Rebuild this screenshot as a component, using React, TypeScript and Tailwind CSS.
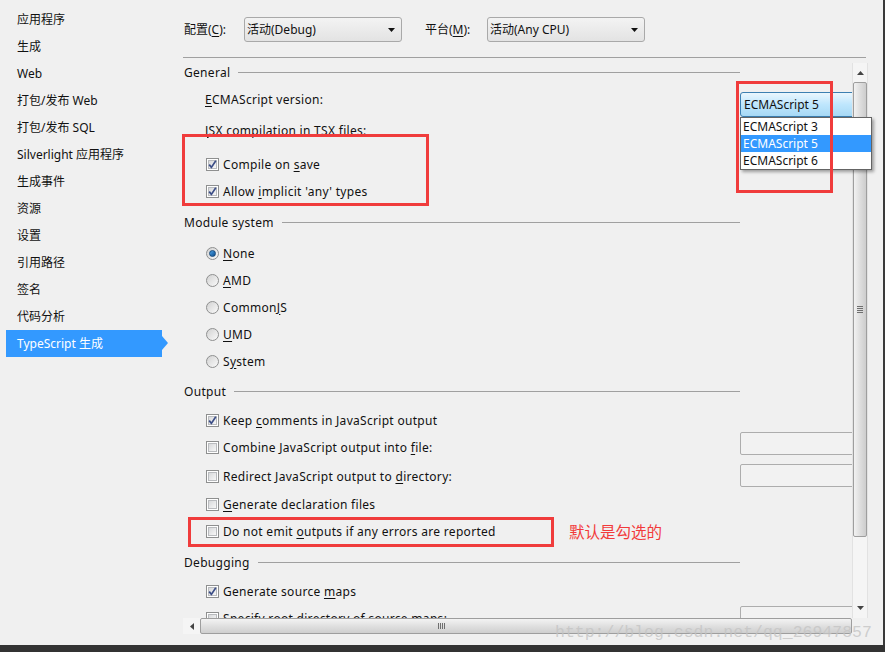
import type { ReactNode } from "react";

const FONT = "font-['Noto_Sans',_'Noto_Sans_CJK_SC',_sans-serif]";

const navItems = [
  "应用程序",
  "生成",
  "Web",
  "打包/发布 Web",
  "打包/发布 SQL",
  "Silverlight 应用程序",
  "生成事件",
  "资源",
  "设置",
  "引用路径",
  "签名",
  "代码分析",
];

function Key({ children }: { children: ReactNode }) {
  return <span className="underline decoration-1 underline-offset-[2px]">{children}</span>;
}

function Check({ on = false }: { on?: boolean }) {
  return (
    <span className="relative flex h-[13px] w-[13px] shrink-0 items-center justify-center border border-[#8e8f8f] bg-white">
      <span className="absolute inset-[1px] border border-[#b9bbbe] bg-gradient-to-br from-[#d8d9db] to-[#f7f7f7]" />
      {on && (
        <svg viewBox="0 0 11 11" className="relative h-[11px] w-[11px]">
          <path d="M2.2 5.6 L4.4 8.4 L8.8 1.8" fill="none" stroke="#3b4d86" strokeWidth="1.7" />
        </svg>
      )}
    </span>
  );
}

function Radio({ on = false }: { on?: boolean }) {
  return (
    <span className="flex h-[13px] w-[13px] shrink-0 items-center justify-center rounded-full border border-[#8e8f8f] bg-gradient-to-br from-[#d2d2d2] to-[#fafafa]">
      {on && <span className="h-[7px] w-[7px] rounded-full border border-[#174a7c] bg-gradient-to-br from-[#4ba3e8] to-[#0c4f8f]" />}
    </span>
  );
}

function Header({ title, mt = "" }: { title: string; mt?: string }) {
  return (
    <div className={`flex h-[27px] w-[557px] items-center pl-[1px] ${mt}`}>
      <span>{title}</span>
      <span className="ml-[8px] h-px flex-1 bg-[#a0a0a0]" />
    </div>
  );
}

function Row({ children, mt = "", right }: { children: ReactNode; mt?: string; right?: ReactNode }) {
  return (
    <div className={`flex h-[27px] ${mt}`}>
      <div className="flex w-[557px] shrink-0 items-center gap-[4px] pl-[23px]">{children}</div>
      {right}
    </div>
  );
}

function TextBox({ mt }: { mt: string }) {
  return <div className={`h-[23px] w-[140px] shrink-0 rounded-[2px] border border-[#adadad] bg-[#f2f2f2] ${mt}`} />;
}

function Select({ label }: { label: string }) {
  return (
    <div className="flex h-[25px] w-[158px] items-center justify-between rounded-[3px] border border-[#a9a9a9] bg-gradient-to-b from-[#f3f3f3] to-[#e3e3e3] pl-[2px] pr-[6px]">
      <span>{label}</span>
      <svg viewBox="0 0 7 4" className="h-[4px] w-[7px]">
        <path d="M0 0 H7 L3.5 4 Z" fill="#111" />
      </svg>
    </div>
  );
}

export default function App() {
  return (
    <div className={`relative flex h-[652px] w-[885px] flex-col overflow-hidden bg-[#f0f0f0] text-[12px] text-[#111] ${FONT}`}>
      <div className="flex h-[645px]">
        {/* left nav */}
        <div className="w-[183px] shrink-0 pt-[6px]">
          {navItems.map((item) => (
            <div key={item} className="flex h-[27px] items-center pl-[17px]">
              {item}
            </div>
          ))}
          <div className="relative ml-[6px] flex h-[27px] w-[156px] items-center bg-[#3399ff] pl-[11px] text-white">
            TypeScript 生成
            <span className="absolute right-[-6px] top-[6px] h-0 w-0 border-y-[7px] border-l-[6px] border-y-transparent border-l-[#3399ff]" />
          </div>
        </div>

        {/* main */}
        <div className="flex w-[700px] flex-col">
          <div className="flex h-[57px] items-center pl-[1px] pt-[2px]">
            <span className="w-[60px]">
              配置(<Key>C</Key>):
            </span>
            <Select label="活动(Debug)" />
            <span className="ml-[23px] w-[62px]">
              平台(<Key>M</Key>):
            </span>
            <Select label="活动(Any CPU)" />
          </div>
          <div className="h-px w-[683px] bg-[#a0a0a0]" />

          <div className="flex h-[560px]">
            <div className="w-[669px] shrink-0 overflow-hidden pt-px tracking-[0.3px]">
              <Header title="General" />
              <div className="flex h-[27px]">
                <div className="flex w-[557px] shrink-0 items-center pl-[22px]">
                  <span>
                    <Key>E</Key>CMAScript version:
                  </span>
                </div>
                <div className="mt-[6px] flex h-[25px] w-[140px] shrink-0 items-center rounded-[3px] border border-[#3c7fb1] bg-gradient-to-b from-[#eaf6fd] via-[#bee6fd] to-[#a7d9f5] pl-[3px] tracking-normal">
                  ECMAScript 5
                </div>
              </div>
              <div className="mt-[4px] flex h-[27px] items-center pl-[22px]">
                <span>
                  <Key>J</Key>SX compilation in TSX files:
                </span>
              </div>
              <Row mt="mt-[7px]">
                <Check on />
                <span>
                  Compile on <Key>s</Key>ave
                </span>
              </Row>
              <Row>
                <Check on />
                <span>
                  Allow <Key>i</Key>mplicit 'any' types
                </span>
              </Row>

              <Header title="Module system" mt="mt-[4px]" />
              <Row mt="mt-[4px]">
                <Radio on />
                <span>
                  <Key>N</Key>one
                </span>
              </Row>
              <Row>
                <Radio />
                <span>
                  <Key>A</Key>MD
                </span>
              </Row>
              <Row>
                <Radio />
                <span>
                  Common<Key>J</Key>S
                </span>
              </Row>
              <Row>
                <Radio />
                <span>
                  <Key>U</Key>MD
                </span>
              </Row>
              <Row>
                <Radio />
                <span>
                  S<Key>y</Key>stem
                </span>
              </Row>

              <Header title="Output" mt="mt-[3px]" />
              <Row mt="mt-[2px]">
                <Check on />
                <span>
                  Keep <Key>c</Key>omments in JavaScript output
                </span>
              </Row>
              <Row right={<TextBox mt="-mt-[2px]" />}>
                <Check />
                <span>
                  Combine JavaScript output into <Key>f</Key>ile:
                </span>
              </Row>
              <Row mt="mt-[2px]" right={<TextBox mt="mt-[1px]" />}>
                <Check />
                <span>
                  Redirect JavaScript output to <Key>d</Key>irectory:
                </span>
              </Row>
              <Row mt="mt-px">
                <Check />
                <span>
                  <Key>G</Key>enerate declaration files
                </span>
              </Row>
              <Row>
                <Check />
                <span>
                  Do not emit <Key>o</Key>utputs if any errors are reported
                </span>
              </Row>

              <Header title="Debugging" mt="mt-[4px]" />
              <Row mt="mt-[2px]">
                <Check on />
                <span>
                  Generate source <Key>m</Key>aps
                </span>
              </Row>
              <Row right={<TextBox mt="mt-[1px]" />}>
                <Check />
                <span>Specify root directory of source maps:</span>
              </Row>
            </div>

            {/* vertical scrollbar */}
            <div className="mt-[5px] flex h-[555px] w-[16px] flex-col border-x border-[#e2e2e2] bg-[#f5f5f5]">
              <div className="flex h-[19px] items-center justify-center">
                <svg viewBox="0 0 7 4" className="h-[4px] w-[7px]">
                  <path d="M0 4 H7 L3.5 0 Z" fill="#444" />
                </svg>
              </div>
              <div className="flex h-[455px] items-center justify-center rounded-[2px] border border-[#9e9e9e] bg-gradient-to-r from-[#f2f2f2] via-[#dedede] to-[#cdcdcd]">
                <div className="flex flex-col gap-px">
                  <span className="h-px w-[6px] bg-[#6f6f6f]" />
                  <span className="h-px w-[6px] bg-[#6f6f6f]" />
                  <span className="h-px w-[6px] bg-[#6f6f6f]" />
                  <span className="h-px w-[6px] bg-[#6f6f6f]" />
                </div>
              </div>
              <div className="flex-1" />
              <div className="flex h-[18px] items-center justify-center pb-[2px]">
                <svg viewBox="0 0 7 4" className="h-[4px] w-[7px]">
                  <path d="M0 0 H7 L3.5 4 Z" fill="#444" />
                </svg>
              </div>
            </div>
          </div>

          {/* horizontal scrollbar */}
          <div className="flex h-[16px] w-[669px] bg-[#f5f5f5]">
            <div className="flex w-[17px] items-center justify-center">
              <svg viewBox="0 0 4 7" className="h-[7px] w-[4px]">
                <path d="M4 0 V7 L0 3.5 Z" fill="#444" />
              </svg>
            </div>
            <div className="flex flex-1 items-center rounded-[2px] border border-[#9e9e9e] bg-gradient-to-b from-[#f3f3f3] via-[#e0e0e0] to-[#cfcfcf] pl-[237px]">
              <div className="flex gap-px">
                <span className="h-[6px] w-px bg-[#6f6f6f]" />
                <span className="h-[6px] w-px bg-[#6f6f6f]" />
                <span className="h-[6px] w-px bg-[#6f6f6f]" />
                <span className="h-[6px] w-px bg-[#6f6f6f]" />
              </div>
            </div>
          </div>
        </div>
        <div className="ml-auto w-[2px] bg-[#3a3a3a]" />
      </div>
      <div className="h-[7px] bg-[#333333]" />

      {/* open dropdown list */}
      <div className="absolute left-[740px] top-[117px] w-[132px] border border-[#646464] bg-white shadow-[2px_2px_3px_rgba(0,0,0,0.35)]">
        <div className="flex h-[17px] items-center pl-[2px]">ECMAScript 3</div>
        <div className="flex h-[17px] items-center bg-[#3399ff] pl-[2px] text-white">ECMAScript 5</div>
        <div className="flex h-[17px] items-center pl-[2px]">ECMAScript 6</div>
      </div>

      {/* annotations */}
      <div className="pointer-events-none absolute left-[182px] top-[134px] h-[72px] w-[247px] border-[3px] border-[#f03c3c]" />
      <div className="pointer-events-none absolute left-[736px] top-[81px] h-[112px] w-[97px] border-[3px] border-[#f03c3c]" />
      <div className="pointer-events-none absolute left-[188px] top-[517px] h-[30px] w-[366px] border-[3px] border-[#f03c3c]" />
      <div className="absolute left-[569px] top-[520px] font-['Noto_Sans_CJK_SC',_sans-serif] text-[15.5px] leading-[22px] text-[#f23a3a]">默认是勾选的</div>
      <div className="pointer-events-none absolute left-[555px] top-[622px] font-['Liberation_Mono',_monospace] text-[16.5px] leading-[22px] text-[#c4c4c4]/80">
        http://blog.csdn.net/qq_26947857
      </div>
    </div>
  );
}
